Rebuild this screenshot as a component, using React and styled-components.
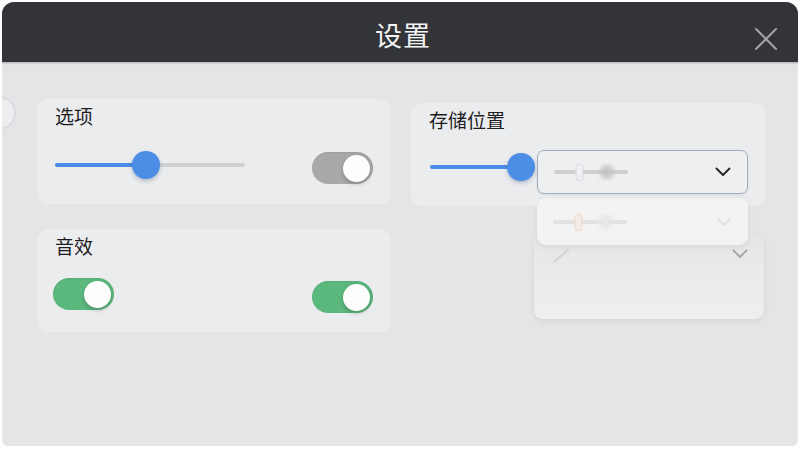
import React, { useState } from 'react';
import styled, { createGlobalStyle } from 'styled-components';

const GlobalStyle = createGlobalStyle`
  html, body {
    margin: 0;
    padding: 0;
    background: #ffffff;
    font-family: "Noto Sans", "Noto Sans CJK SC", sans-serif;
  }
`;

const Page = styled.div`
  width: 800px;
  height: 450px;
  padding: 2px 2px 4px 2px;
  box-sizing: border-box;
`;

const Dialog = styled.div`
  height: 100%;
  display: flex;
  flex-direction: column;
  border-radius: 12px 12px 6px 6px;
  overflow: hidden;
  background: #e3e5e7;
`;

const Header = styled.div`
  height: 60px;
  flex: none;
  background: #333438;
  display: flex;
  align-items: center;
  justify-content: center;
  position: relative;
  box-shadow: 0 1px 2px rgba(0, 0, 0, 0.25);
  z-index: 1;
`;

const Title = styled.h1`
  margin: 4px 0 0 6px;
  font-family: "Noto Sans CJK SC", sans-serif;
  font-weight: 400;
  font-size: 27px;
  color: #f4f4f4;
  letter-spacing: 1px;
`;

const CloseButton = styled.button`
  position: absolute;
  right: 20px;
  top: 25px;
  width: 24px;
  height: 24px;
  padding: 0;
  border: none;
  background: none;
  cursor: pointer;
`;

const Body = styled.div`
  flex: 1;
  position: relative;
  display: grid;
  grid-template-columns: 354px 355px;
  grid-auto-rows: min-content;
  column-gap: 20px;
  row-gap: 23px;
  padding: 37px 0 0 35px;
`;

const EdgeRing = styled.div`
  position: absolute;
  left: -14px;
  top: 35px;
  width: 24px;
  height: 28px;
  border-radius: 50%;
  background: #eceef0;
  border: 2px solid #d9dbde;
`;

const Card = styled.section`
  position: relative;
  height: ${(p) => p.$h || 105}px;
  margin-top: ${(p) => p.$shift || 0}px;
  border-radius: 12px;
  background: #ebecee;
  padding: 5px 18px 0 18px;
  box-sizing: border-box;
  display: flex;
  flex-direction: column;
`;

const CardTitle = styled.h2`
  margin: 0;
  font-family: "Noto Sans CJK SC", sans-serif;
  font-weight: 400;
  font-size: 19px;
  line-height: 24px;
  color: #1d1d1f;
`;

const Row = styled.div`
  display: flex;
  align-items: center;
  justify-content: space-between;
  margin-top: ${(p) => p.$top || 18}px;
  margin-left: ${(p) => p.$left || 0}px;
`;

const SliderWrap = styled.div`
  position: relative;
  width: ${(p) => p.$w}px;
  height: 28px;
  margin-bottom: ${(p) => p.$lift || 0}px;
  display: flex;
  align-items: center;
`;

const Track = styled.div`
  width: 100%;
  height: 4px;
  border-radius: 2px;
  background: #d0d1d3;
`;

const Fill = styled.div`
  position: absolute;
  left: 0;
  height: 4px;
  border-radius: 2px;
  background: #4a8ce6;
`;

const Thumb = styled.div`
  position: absolute;
  top: 0;
  width: 28px;
  height: 28px;
  margin-left: -14px;
  border-radius: 50%;
  background: #4c8de6;
  box-shadow: 0 2px 4px rgba(40, 70, 120, 0.3);
`;

const Slider = ({ width, value, lift }) => (
  <SliderWrap $w={width} $lift={lift}>
    <Track />
    <Fill style={{ width: `${value * 100}%` }} />
    <Thumb style={{ left: `${value * 100}%` }} />
  </SliderWrap>
);

const SwitchTrack = styled.button`
  width: 61px;
  height: 32px;
  padding: 0 3px;
  margin-top: ${(p) => p.$drop || 0}px;
  border: none;
  border-radius: 16px;
  background: ${(p) => (p.$tone === 'green' ? '#5cb97e' : '#a8a9ab')};
  display: flex;
  align-items: center;
  justify-content: flex-end;
  cursor: pointer;
  box-shadow: inset 0 1px 2px rgba(0, 0, 0, 0.08);
`;

const Knob = styled.span`
  width: 27px;
  height: 27px;
  border-radius: 50%;
  background: #fdfdfd;
  box-shadow: 0 2px 4px rgba(0, 0, 0, 0.22);
`;

const Switch = ({ tone, drop }) => (
  <SwitchTrack $tone={tone} $drop={drop}>
    <Knob />
  </SwitchTrack>
);

const StorageRow = styled.div`
  display: flex;
  align-items: center;
  gap: 16px;
  margin-top: 18px;
  margin-left: 1px;
`;

const Select = styled.div`
  position: relative;
  z-index: 3;
  width: 211px;
  height: 44px;
  box-sizing: border-box;
  border: 1px solid #a3aebf;
  border-radius: 7px;
  background: #eeeff0;
  display: flex;
  align-items: center;
  justify-content: space-between;
  padding: 0 16px 0 15px;
  box-shadow: 0 1px 3px rgba(0, 0, 0, 0.08);
`;

const Ghost = styled.div`
  position: absolute;
  left: ${(p) => p.$x}px;
  top: ${(p) => p.$y}px;
  width: ${(p) => p.$w}px;
  height: ${(p) => p.$h}px;
  z-index: ${(p) => p.$z};
  box-sizing: border-box;
  border-radius: 9px;
  background: ${(p) => p.$bg};
  box-shadow: 0 2px 6px rgba(0, 0, 0, 0.07);
  display: flex;
  align-items: ${(p) => p.$align || 'center'};
  justify-content: space-between;
  padding: ${(p) => p.$pad || '0 16px 0 15px'};
`;

const MiniSlider = ({ faded }) => (
  <svg width="80" height="22" viewBox="0 0 80 22">
    <defs>
      <filter id={faded ? 'blurA' : 'blurB'}>
        <feGaussianBlur stdDeviation="2.5" />
      </filter>
    </defs>
    <rect x="1" y="9" width="74" height="4" rx="2" fill={faded ? '#e2e2e2' : '#cfcfd0'} />
    <circle cx="54" cy="11" r="7" fill={faded ? '#e6e6e6' : '#c4c4c5'} filter={`url(#${faded ? 'blurA' : 'blurB'})`} />
    <rect x="23" y="3" width="7" height="17" rx="3.5" fill={faded ? '#f4ece6' : '#eef0f2'} stroke={faded ? '#e9d8cc' : '#d6d8db'} strokeWidth="1" />
  </svg>
);

const Chevron = ({ color = '#222' }) => (
  <svg width="16" height="10" viewBox="0 0 16 10">
    <path d="M1.5 1.5 L8 8 L14.5 1.5" fill="none" stroke={color} strokeWidth="1.8" strokeLinecap="round" strokeLinejoin="round" />
  </svg>
);

const Slash = () => (
  <svg width="20" height="14" viewBox="0 0 20 14">
    <path d="M2 13 L16 1" stroke="#d2d3d5" strokeWidth="2" strokeLinecap="round" />
  </svg>
);

export default function App() {
  const [open] = useState(true);

  return (
    <Page>
      <GlobalStyle />
      <Dialog>
        <Header>
          <Title>设置</Title>
          <CloseButton aria-label="close">
            <svg width="24" height="24" viewBox="0 0 24 24">
              <path d="M2 2 L22 22 M22 2 L2 22" stroke="#a3a3a5" strokeWidth="2" strokeLinecap="round" />
            </svg>
          </CloseButton>
        </Header>

        <Body>
          <EdgeRing />

          <Card>
            <CardTitle>选项</CardTitle>
            <Row>
              <Slider width={190} value={0.48} />
              <Switch tone="gray" drop={6} />
            </Row>
          </Card>

          <Card $shift={4} $h={103}>
            <CardTitle>存储位置</CardTitle>
            <StorageRow>
              <Slider width={91} value={1} lift={10} />
              <Select>
                <MiniSlider />
                <Chevron />
              </Select>
            </StorageRow>
            {open && (
              <>
                <Ghost $x={126} $y={95} $w={211} $h={47} $z={2} $bg="rgba(243,243,244,0.95)">
                  <MiniSlider faded />
                  <Chevron color="#e2e2e3" />
                </Ghost>
                <Ghost
                  $x={123}
                  $y={130}
                  $w={230}
                  $h={86}
                  $z={1}
                  $bg="linear-gradient(180deg, #e4e5e7 0%, #ececed 60%, #eeeeef 100%)"
                  $align="flex-start"
                  $pad="16px 16px 0 18px"
                >
                  <Slash />
                  <Chevron color="#a2a3a5" />
                </Ghost>
              </>
            )}
          </Card>

          <Card $h={103}>
            <CardTitle>音效</CardTitle>
            <Row $top={17} $left={-2}>
              <Switch tone="green" />
              <Switch tone="green" drop={6} />
            </Row>
          </Card>
        </Body>
      </Dialog>
    </Page>
  );
}
